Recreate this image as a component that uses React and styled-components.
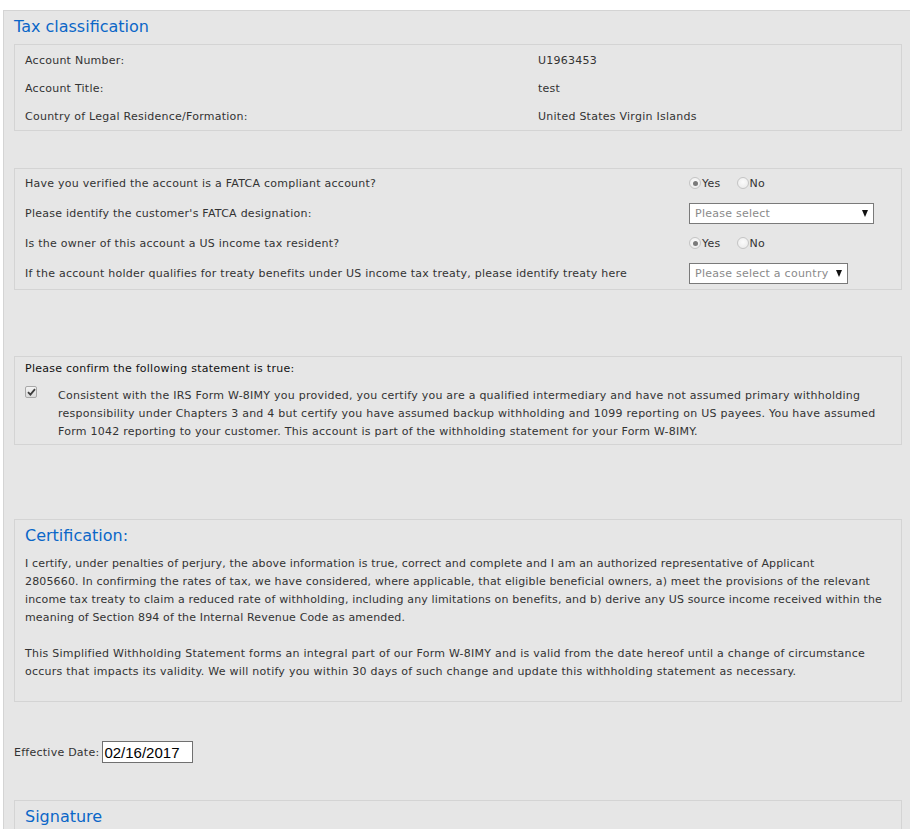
import React from "react";
import styled, { createGlobalStyle } from "styled-components";

const Global = createGlobalStyle`
  html, body { margin: 0; padding: 0; background: #fff; overflow: hidden; }
  body { font-family: "DejaVu Sans", Verdana, sans-serif; font-size: 11px; color: #333; letter-spacing: 0.25px; }
`;

const Page = styled.div`
  padding: 10px 0 0 3px;
`;

const Panel = styled.div`
  background: #e6e6e6;
  border: 1px solid #d4d4d4;
  border-right: none;
  padding: 0 8px 40px 10px;
  min-height: 900px;
`;

const Title = styled.h2`
  margin: 0;
  padding: 6px 0 7px;
  font-size: 16px;
  line-height: 20px;
  font-weight: normal;
  letter-spacing: 0;
  color: #0b66c8;
`;

const Box = styled.div`
  border: 1px solid #d4d4d4;
  padding: ${(p) => p.$pad || "0 10px"};
  margin-top: ${(p) => p.$mt || 0}px;
`;

const Grid = styled.div`
  display: grid;
  grid-template-columns: ${(p) => p.$cols};
  grid-auto-rows: ${(p) => p.$row}px;
  align-items: center;
  margin-top: ${(p) => p.$shift || 0}px;
`;

const Text = styled.span`
  white-space: nowrap;
`;

const RadioGroup = styled.div`
  display: flex;
  align-items: center;
  gap: 16px;
`;

const RadioLabel = styled.label`
  display: flex;
  align-items: center;
  color: #333;
`;

const RadioDot = styled.span`
  width: 12px;
  height: 12px;
  box-sizing: border-box;
  border-radius: 50%;
  border: 1px solid #c4c4c4;
  background: radial-gradient(circle at 50% 40%, #fbfbfb, #e8e8e8);
  display: inline-flex;
  align-items: center;
  justify-content: center;
  margin-right: 1px;
  &::after {
    content: "";
    width: 5px;
    height: 5px;
    border-radius: 50%;
    background: ${(p) => (p.$on ? "#7a7a7a" : "transparent")};
  }
`;

const Select = styled.div`
  width: ${(p) => p.$w}px;
  height: 21px;
  box-sizing: border-box;
  background: #fff;
  border: 1px solid #7a7a7a;
  display: flex;
  align-items: center;
  justify-content: space-between;
  padding: 0 5px 0 5px;
  color: #8a8a8a;
  font-size: 11px;
`;

const Arrow = styled.span`
  width: 0;
  height: 0;
  border-left: 3.5px solid transparent;
  border-right: 3.5px solid transparent;
  border-top: 7px solid #111;
  margin-top: 1px;
`;

const Heading = styled.div`
  line-height: 18px;
  color: #111;
`;

const ConfirmRow = styled.div`
  display: flex;
  align-items: flex-start;
  margin-top: 9px;
`;

const Check = styled.span`
  flex: none;
  width: 12px;
  height: 12px;
  box-sizing: border-box;
  border: 1px solid #a8a8a8;
  border-radius: 2px;
  background: linear-gradient(#f4f4f4, #dadada);
  margin-top: -1px;
  margin-right: 21px;
  display: flex;
  align-items: center;
  justify-content: center;
`;

const Para = styled.p`
  margin: 0 0 ${(p) => p.$mb || 0}px;
  line-height: 18px;
  letter-spacing: ${(p) => p.$ls || "0.25px"};
`;

const SubTitle = styled.h3`
  margin: 0;
  padding: 6px 0 9px;
  font-size: 16px;
  line-height: 20px;
  font-weight: normal;
  letter-spacing: 0;
  color: #0b66c8;
`;

const DateRow = styled.div`
  display: flex;
  align-items: center;
  margin-top: 39px;
  gap: 3px;
`;

const DateInput = styled.div`
  width: 91px;
  height: 22px;
  box-sizing: border-box;
  border: 1px solid #707070;
  background: #fff;
  font-family: "Liberation Sans", Arial, sans-serif;
  font-size: 15px;
  letter-spacing: 0;
  color: #000;
  display: flex;
  align-items: center;
  padding-left: 1px;
`;

const Radio = ({ on, label }) => (
  <RadioLabel>
    <RadioDot $on={on} />
    {label}
  </RadioLabel>
);

const YesNo = () => (
  <RadioGroup>
    <Radio on label="Yes" />
    <Radio label="No" />
  </RadioGroup>
);

export default function App() {
  return (
    <Page>
      <Global />
      <Panel>
        <Title>Tax classification</Title>
        <Box $pad="1px 10px 0">
          <Grid $cols="513px 1fr" $row={28}>
            <Text>Account Number:</Text>
            <Text>U1963453</Text>
            <Text>Account Title:</Text>
            <Text>test</Text>
            <Text>Country of Legal Residence/Formation:</Text>
            <Text>United States Virgin Islands</Text>
          </Grid>
        </Box>

        <Box $mt={37} $pad="0 10px 1px">
          <Grid $cols="664px 1fr" $row={30} $shift={-1}>
            <Text>Have you verified the account is a FATCA compliant account?</Text>
            <YesNo />
            <Text>Please identify the customer's FATCA designation:</Text>
            <Select $w={185}>
              <span>Please select</span>
              <Arrow />
            </Select>
            <Text>Is the owner of this account a US income tax resident?</Text>
            <YesNo />
            <Text>
              If the account holder qualifies for treaty benefits under US income tax treaty, please identify treaty here
            </Text>
            <Select $w={159}>
              <span>Please select a country</span>
              <Arrow />
            </Select>
          </Grid>
        </Box>

        <Box $mt={66} $pad="3px 14px 3px 10px">
          <Heading>Please confirm the following statement is true:</Heading>
          <ConfirmRow>
            <Check>
              <svg width="9" height="8" viewBox="0 0 9 8">
                <path d="M1 4.2 L3.4 6.6 L8 1.2" fill="none" stroke="#3c3c3c" strokeWidth="1.8" />
              </svg>
            </Check>
            <Para>
              Consistent with the IRS Form W-8IMY you provided, you certify you are a qualified intermediary and have not
              assumed primary withholding responsibility under Chapters 3 and 4 but certify you have assumed backup
              withholding and 1099 reporting on US payees. You have assumed Form 1042 reporting to your customer. This
              account is part of the withholding statement for your Form W-8IMY.
            </Para>
          </ConfirmRow>
        </Box>

        <Box $mt={74} $pad="0 8px 2px 10px">
          <SubTitle>Certification:</SubTitle>
          <Para $mb={18} $ls="0.15px">
            I certify, under penalties of perjury, the above information is true, correct and complete and I am an
            authorized representative of Applicant
            <br />
            2805660. In confirming the rates of tax, we have considered, where applicable, that eligible beneficial
            owners, a) meet the provisions of the relevant income tax treaty to claim a reduced rate of withholding,
            including any limitations on benefits, and b) derive any US source income received within the meaning of
            Section 894 of the Internal Revenue Code as amended.
          </Para>
          <Para $mb={18}>
            This Simplified Withholding Statement forms an integral part of our Form W-8IMY and is valid from the date
            hereof until a change of circumstance occurs that impacts its validity. We will notify you within 30 days
            of such change and update this withholding statement as necessary.
          </Para>
        </Box>

        <DateRow>
          <span>Effective Date:</span>
          <DateInput>02/16/2017</DateInput>
        </DateRow>

        <Box $mt={37} $pad="0 10px 40px">
          <SubTitle>Signature</SubTitle>
        </Box>
      </Panel>
    </Page>
  );
}
